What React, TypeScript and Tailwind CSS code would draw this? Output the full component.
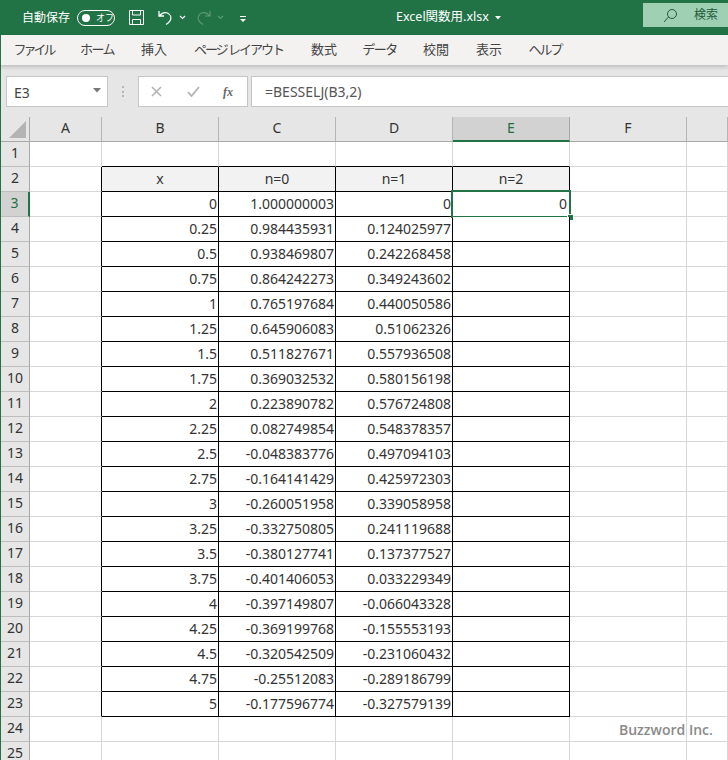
import React from "react";

const jp = "font-['Noto_Sans','Noto_Sans_CJK_JP',sans-serif]";
const rows: [string, string, string][] = [
  ["0", "1.000000003", "0"],
  ["0.25", "0.984435931", "0.124025977"],
  ["0.5", "0.938469807", "0.242268458"],
  ["0.75", "0.864242273", "0.349243602"],
  ["1", "0.765197684", "0.440050586"],
  ["1.25", "0.645906083", "0.51062326"],
  ["1.5", "0.511827671", "0.557936508"],
  ["1.75", "0.369032532", "0.580156198"],
  ["2", "0.223890782", "0.576724808"],
  ["2.25", "0.082749854", "0.548378357"],
  ["2.5", "-0.048383776", "0.497094103"],
  ["2.75", "-0.164141429", "0.425972303"],
  ["3", "-0.260051958", "0.339058958"],
  ["3.25", "-0.332750805", "0.241119688"],
  ["3.5", "-0.380127741", "0.137377527"],
  ["3.75", "-0.401406053", "0.033229349"],
  ["4", "-0.397149807", "-0.066043328"],
  ["4.25", "-0.369199768", "-0.155553193"],
  ["4.5", "-0.320542509", "-0.231060432"],
  ["4.75", "-0.25512083", "-0.289186799"],
  ["5", "-0.177596774", "-0.327579139"],
];
const tabs: [string, string][] = [
  ["ファイル", "w-[65px] tracking-[-3px]"],
  ["ホーム", "w-[62px] tracking-[-1.5px]"],
  ["挿入", "w-[52px]"],
  ["ページ レイアウト", "w-[117px] tracking-[-2px]"],
  ["数式", "w-[54px]"],
  ["データ", "w-[57px] tracking-[-1.5px]"],
  ["校閲", "w-[56px]"],
  ["表示", "w-[50px]"],
  ["ヘルプ", "w-[62px] tracking-[-2px]"],
];
const cols = ["A", "B", "C", "D", "E", "F", ""];
const grid = "grid grid-cols-[29px_72px_117px_117px_117px_117px_117px_41px]";

function Cell({ children, right, black, blackBottom, shade, center }: { children?: React.ReactNode; right?: boolean; black?: boolean; blackBottom?: boolean; shade?: boolean; center?: boolean }) {
  return (
    <div
      className={`h-[25px] border-r border-b flex items-center leading-none text-[14px] text-[#333] ${
        black ? "border-r-black" : "border-r-[#d6d6d6]"
      } ${blackBottom ? "border-b-black" : "border-b-[#d6d6d6]"} ${shade ? "bg-[#f2f2f2]" : "bg-white"} ${
        center ? "justify-center" : right ? "justify-end pr-[1px]" : ""
      }`}
    >
      {children}
    </div>
  );
}

function RowHead({ n, active }: { n: number; active?: boolean }) {
  return (
    <div
      className={`h-[25px] flex items-center justify-center text-[14px] leading-none border-b pb-[2px] ${
        active ? "bg-[#d2d2d2] text-[#1f6e43] border-r-2 border-r-[#217346] border-b-[#bdbdbd]" : "bg-[#e6e6e6] text-[#333] border-r border-r-[#a8a8a8] border-b-[#bdbdbd]"
      }`}
    >
      {n}
    </div>
  );
}

export default function App() {
  return (
    <div className={`w-[728px] h-[760px] overflow-hidden bg-white relative ${jp}`}>
      {/* title bar */}
      <div className="h-[35px] bg-[#217346] flex items-center text-white">
        <span className="ml-[22px] text-[12px] leading-none">自動保存</span>
        <div className="ml-[7px] w-[38px] h-[16px] rounded-full border border-white flex items-center pl-[4px]">
          <div className="w-[8px] h-[8px] rounded-full bg-white" />
          <span className="ml-[6px] text-[9px] leading-none">オフ</span>
        </div>
        <svg className="ml-[13px]" width="17" height="17" viewBox="0 0 17 17" fill="none" stroke="#fff" strokeWidth="1">
          <path d="M1.5 1.5h14v14h-14z" />
          <path d="M4.5 1.5v4.5h8v-4.5M4.5 15.5v-5h8v5" />
        </svg>
        <svg className="ml-[12px]" width="18" height="18" viewBox="0 0 18 18" fill="none" stroke="#fff" strokeWidth="1.3">
          <path d="M2 2v5h5M2.5 7c2-3 5-4 8-3 3 1.500 4 4.500 3 7-1 2-2.500 3.500-4.500 4.500" />
        </svg>
        <svg className="ml-[4px]" width="7" height="5" viewBox="0 0 7 5" fill="none" stroke="#fff" strokeWidth="1.2">
          <path d="M1 1l2.500 2.500L6 1" />
        </svg>
        <svg className="ml-[9px]" width="18" height="18" viewBox="0 0 18 18" fill="none" stroke="#5b9a78" strokeWidth="1.2">
          <path d="M15 2v5h-5M14.500 7c-2-3-5-4-8-3-3 1.500-4 4.500-3 7 1 2 2.500 3.500 4.500 4.500" />
        </svg>
        <svg className="ml-[4px]" width="7" height="5" viewBox="0 0 7 5" fill="none" stroke="#5b9a78" strokeWidth="1.2">
          <path d="M1 1l2.500 2.500L6 1" />
        </svg>
        <svg className="ml-[15px] mt-[2px]" width="8" height="8" viewBox="0 0 8 8" fill="none" stroke="#fff">
          <path d="M1 1.500h6" />
          <path d="M1 4l3 3 3-3z" fill="#fff" stroke="none" />
        </svg>
        <span className="ml-[149px] text-[12.5px] leading-none whitespace-nowrap">Excel関数用.xlsx</span>
        <svg className="ml-[6px]" width="6" height="4" viewBox="0 0 6 4" fill="#fff">
          <path d="M0 0h6L3 3.500z" />
        </svg>
        <div className="ml-auto w-[85px] h-[24px] -mt-[5px] mr-0 bg-[#a0d0b4] text-[#1e5b3c] flex items-center">
          <svg className="ml-[20px]" width="15" height="15" viewBox="0 0 15 15" fill="none" stroke="#1e5b3c" strokeWidth="1">
            <circle cx="9" cy="6" r="4.500" />
            <path d="M5.500 9L1 14" />
          </svg>
          <span className="ml-[16px] text-[12px] leading-none">検索</span>
        </div>
      </div>

      {/* ribbon tabs */}
      <div className="h-[30px] bg-[#f3f2f1] flex items-center text-[13px] text-[#444] shadow-[0_2px_4px_rgba(0,0,0,0.18)] relative border-l border-l-[#217346]">
        {tabs.map(([t, w]) => (
          <div key={t} className={`${w} flex justify-center leading-none shrink-0 whitespace-pre -mt-[1px]`}>
            {t}
          </div>
        ))}
      </div>

      {/* formula bar */}
      <div className="h-[52px] bg-[#e6e6e6] flex pt-[11px] pl-[5px] border-l border-l-[#217346]">
        <div className="w-[102px] h-[31px] bg-white border border-[#c6c6c6] flex items-center text-[14px] text-[#444] pl-[7px] leading-none">
          <span className="pt-[3px]">E3</span>
          <svg className="ml-auto mr-[6px] -mt-[3px]" width="8" height="5" viewBox="0 0 8 5" fill="#777">
            <path d="M0 0h8L4 4.500z" />
          </svg>
        </div>
        <div className="ml-[13px] w-[3px] h-[11px] mt-[10px] flex flex-col justify-between items-center">
          <div className="w-[2px] h-[2px] bg-[#b5b5b5]" />
          <div className="w-[2px] h-[2px] bg-[#b5b5b5]" />
          <div className="w-[2px] h-[2px] bg-[#b5b5b5]" />
        </div>
        <div className="ml-[14px] w-[110px] h-[31px] bg-white border border-[#c6c6c6] flex items-center">
          <svg className="ml-[12px]" width="11" height="11" viewBox="0 0 11 11" fill="none" stroke="#b3b3b3" strokeWidth="1.600">
            <path d="M1 1l9 9M10 1l-9 9" />
          </svg>
          <svg className="ml-[25px]" width="13" height="11" viewBox="0 0 13 11" fill="none" stroke="#b3b3b3" strokeWidth="1.800">
            <path d="M1 6l3.500 4L12 1" />
          </svg>
          <span className="ml-[23px] font-['Liberation_Serif',serif] italic font-bold text-[12px] leading-none text-[#666]">fx</span>
        </div>
        <div className="ml-[3px] flex-1 h-[31px] bg-white border-y border-l border-[#c6c6c6] flex items-center pl-[13px] text-[14px] text-[#555] leading-none">
          <span>=BESSELJ(B3,2)</span>
        </div>
      </div>

      {/* sheet */}
      <div className="border-l border-l-[#217346] relative">
        <div className={`${grid} h-[25px] bg-[#e6e6e6]`}>
          <div className="relative border-r border-b border-r-[#a8a8a8] border-b-[#a8a8a8]">
            <svg className="absolute right-[3px] bottom-[3px]" width="17" height="17" viewBox="0 0 17 17" fill="#b4b4b4">
              <path d="M17 0v17H0z" />
            </svg>
          </div>
          {cols.map((c, i) => (
            <div
              key={i}
              className={`flex items-center justify-center text-[14px] leading-none border-r pb-[2px] ${
                c === "E"
                  ? "bg-[#d2d2d2] text-[#1f6e43] border-b-2 border-b-[#217346] border-r-[#a8a8a8]"
                  : "text-[#333] border-b border-b-[#a8a8a8] border-r-[#b5b5b5]"
              }`}
            >
              {c}
            </div>
          ))}
        </div>

        <div className={grid}>
          {/* row 1 */}
          <RowHead n={1} />
          <Cell />
          <Cell blackBottom />
          <Cell blackBottom />
          <Cell blackBottom />
          <Cell blackBottom />
          <Cell />
          <Cell />

          {/* row 2 */}
          <RowHead n={2} />
          <Cell black />
          {["x", "n=0", "n=1", "n=2"].map((h) => (
            <Cell key={h} black blackBottom shade center>
              {h}
            </Cell>
          ))}
          <Cell />
          <Cell />

          {/* rows 3-23 */}
          {rows.map((r, i) => (
            <React.Fragment key={i}>
              <RowHead n={i + 3} active={i === 0} />
              <Cell black />
              <Cell right black blackBottom>{r[0]}</Cell>
              <Cell right black blackBottom>{r[1]}</Cell>
              <Cell right black blackBottom>{r[2]}</Cell>
              <div className="relative">
                <Cell right black blackBottom>{i === 0 ? <span className="pr-[1px]">0</span> : null}</Cell>
                {i === 0 && (
                  <>
                    <div className="absolute -left-[2px] -top-[2px] w-[120px] h-[28px] border-2 border-[#217346]" />
                    <div className="absolute right-[-4px] bottom-[-4px] w-[7px] h-[7px] bg-[#217346] border border-white" />
                  </>
                )}
              </div>
              <Cell />
              <Cell />
            </React.Fragment>
          ))}

          {/* rows 24-25 */}
          {[24, 25].map((n) => (
            <React.Fragment key={n}>
              <RowHead n={n} />
              <Cell />
              <Cell />
              <Cell />
              <Cell />
              <Cell />
              <Cell />
              <Cell />
            </React.Fragment>
          ))}
        </div>

        {/* watermark */}
        <div className="absolute left-[618px] top-[606px] text-[14px] leading-none font-['Open_Sans',sans-serif] font-semibold text-[#8a8a8a] whitespace-nowrap">
          Buzzword Inc.
        </div>
      </div>
    </div>
  );
}
